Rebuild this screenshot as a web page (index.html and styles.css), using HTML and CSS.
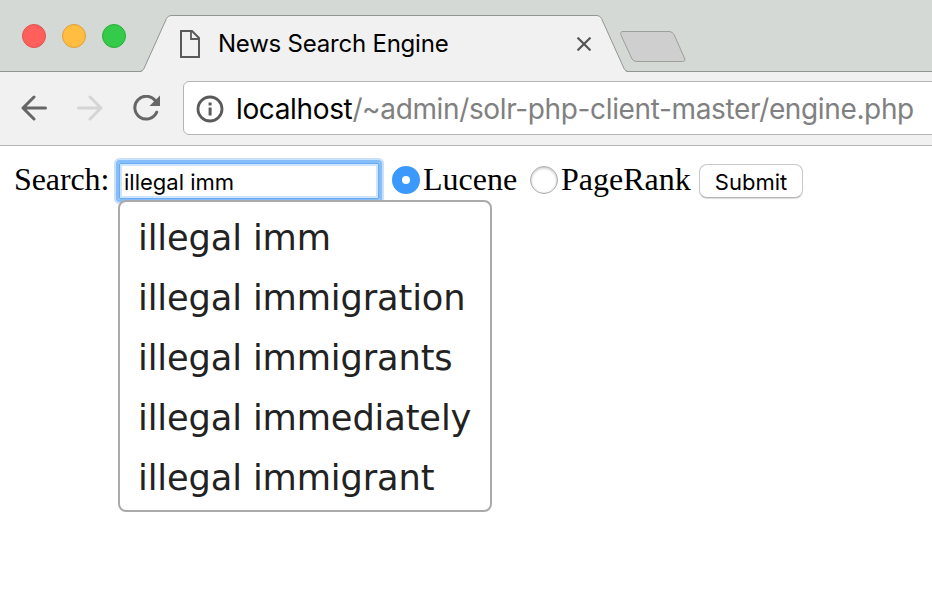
FILE: index.html
```
<!DOCTYPE html>
<html lang="en">
<head>
<meta charset="utf-8">
<title>News Search Engine</title>
<link rel="stylesheet" href="styles.css">
</head>
<body>
<header class="tabstrip">
  <div class="lights">
    <span class="light red"></span>
    <span class="light yellow"></span>
    <span class="light green"></span>
  </div>
  <div class="tab">
    <svg class="tab-shape" width="488" height="57" viewBox="0 0 488 57">
      <path d="M0 57 Q2.5 57 4 54 L26.500 3.500 Q28 .5 31 .5 H457 Q460 .5 461.500 3.500 L484 53.500 Q485.500 57 488 57Z" fill="#f1f1f1"/>
      <path d="M0 56.500 Q2.500 56.500 4 53.500 L26.500 3.500 Q28 .5 31 .5 H457 Q460 .5 461.500 3.500 L484 53.500 Q485.500 56.500 488 56.500" fill="none" stroke="#929692"/>
    </svg>
    <svg class="page-icon" width="20" height="28" viewBox="0 0 20 28" fill="none" stroke="#5a5a5a" stroke-width="2">
      <path d="M1 1H12L19 8V27H1Z"/><path d="M11 1V9H19" stroke-width="1.800"/>
    </svg>
    <span class="tab-title">News Search Engine</span>
    <svg class="close" width="14" height="14" viewBox="0 0 14 14" stroke="#555" stroke-width="2.200" stroke-linecap="round"><path d="M1.200 1.200 12.800 12.800M12.800 1.200 1.200 12.800"/></svg>
  </div>
  <svg class="new-tab" width="66" height="32" viewBox="0 0 66 32"><path d="M3 .5H49Q52.500 .5 54 3.500L64 26Q66.500 30.500 62.500 30.500H17Q13.500 30.500 12 28L1.200 4.500Q-.5 .5 3 .5Z" fill="#cfcfcf" stroke="#9b9e9b"/></svg>
</header>
<nav class="toolbar">
  <svg class="back" width="26" height="26" viewBox="0 0 26 26" fill="none" stroke="#666" stroke-width="3" stroke-linecap="round" stroke-linejoin="round"><path d="M24.500 13H2M13 2 2 13 13 24"/></svg>
  <svg class="forward" width="26" height="26" viewBox="0 0 26 26" fill="none" stroke="#d5d5d5" stroke-width="3" stroke-linecap="round" stroke-linejoin="round"><path d="M1.500 13H24M13 2 24 13 13 24"/></svg>
  <svg class="reload" width="28" height="27" viewBox="0 0 28 27"><path d="M22.500 6A11.400 11.400 0 1 0 23.700 17.200" fill="none" stroke="#666" stroke-width="3" stroke-linecap="round"/><path d="M27 .5V11H16.500Z" fill="#666"/></svg>
  <div class="address">
    <svg class="info" width="28" height="28" viewBox="0 0 28 28"><circle cx="14" cy="14" r="12" fill="none" stroke="#5a5a5a" stroke-width="2.800"/><path d="M12.600 7.500h3v3h-3zM12.600 12.500h3v8h-3z" fill="#5a5a5a"/></svg>
    <span class="url"><span class="host">localhost</span><span class="path">/~admin/solr-php-client-master/engine.php</span></span>
  </div>
</nav>
<main>
  <form class="search">
    <span class="label label-search">Search:</span>
    <div class="field">
      <div class="query">illegal imm</div>
      <ul class="suggestions">
        <li>illegal imm</li>
        <li>illegal immigration</li>
        <li>illegal immigrants</li>
        <li>illegal immediately</li>
        <li>illegal immigrant</li>
      </ul>
    </div>
    <span class="radio checked"></span>
    <span class="label label-lucene">Lucene</span>
    <span class="radio"></span>
    <span class="label label-rank">PageRank</span>
    <button type="button" class="submit"><span>Submit</span></button>
  </form>
</main>
</body>
</html>
```
FILE: styles.css
```
* { box-sizing: border-box; }
svg { flex: none; }
body {
  margin: 0;
  width: 932px;
  height: 598px;
  overflow: hidden;
  background: #fff;
  color: #000;
  font-family: Inter, sans-serif;
}
.tabstrip {
  display: flex;
  height: 72px;
  background: #d4d9d5;
  border-bottom: 1px solid #929692;
}
.lights { display: flex; gap: 16px; padding: 24px 0 0 22px; width: 142px; }
.light { width: 24px; height: 24px; border-radius: 50%; border: 1px solid; }
.red { background: #ff605c; border-color: #e2504d; }
.yellow { background: #ffbe41; border-color: #df9f36; }
.green { background: #34ca4a; border-color: #2bac3a; }
.tab {
  position: relative;
  display: flex;
  width: 478px;
  height: 57px;
  margin-top: 15px;
  padding-left: 38px;
}
.tab-shape { position: absolute; left: -2px; top: 0; }
.page-icon { position: relative; margin-top: 15px; }
.tab-title {
  position: relative;
  margin-left: 18px;
  width: 359px;
  font-size: 24px;
  line-height: 58px;
  letter-spacing: -0.22px;
  white-space: nowrap;
}
.close { position: relative; margin-top: 22px; }
.new-tab { position: relative; margin-top: 31px; }
.toolbar {
  display: flex;
  height: 74px;
  background: #f1f1f1;
  border-bottom: 1px solid #b5b5b5;
}
.back { margin: 23px 0 0 21px; }
.forward { margin: 23px 0 0 30px; }
.reload { margin: 23px 0 0 30px; }
.address {
  display: flex;
  flex: none;
  width: 770px;
  height: 54px;
  margin: 9px 0 0 22px;
  padding-left: 12px;
  background: #fff;
  border: 1px solid #b5b5b5;
  border-radius: 6px;
}
.info { margin-top: 13px; }
.url {
  margin-left: 12px;
  font-size: 28px;
  line-height: 54px;
  letter-spacing: -0.36px;
  white-space: nowrap;
}
.path { color: #808080; }
.search { display: flex; padding: 13px 0 0 14px; }
.label {
  font: 32px/41px "Liberation Serif", serif;
  white-space: nowrap;
}
.label-search { width: 104px; letter-spacing: -0.1px; }
.field { position: relative; width: 264px; }
.query {
  width: 262px;
  height: 38px;
  margin-top: 3px;
  padding-left: 5px;
  border: 1px solid #85bdfb;
  box-shadow: inset 0 0 0 1px #6aabf4, inset 0 0 0 3px #cfe5ff, 0 0 0 2px #85bdfb, 0 0 0 4px #c9e1fd;
  border-radius: 2px;
  font-size: 22px;
  line-height: 39px;
  white-space: nowrap;
}
.suggestions {
  position: absolute;
  left: 0;
  top: 41px;
  width: 374px;
  height: 312px;
  margin: 0;
  padding: 6px 0 0 18px;
  border: 2px solid #aaa;
  border-radius: 8px;
  background: #fff;
  list-style: none;
  color: #222;
  font: 35.2px/60px "DejaVu Sans", sans-serif;
  letter-spacing: -0.12px;
  white-space: nowrap;
}
.radio {
  width: 28px;
  height: 28px;
  margin: 7px 3px 0 10px;
  border: 1px solid #aaa;
  border-radius: 50%;
  background: #fff;
  box-shadow: inset 0 1px 3px #bbb;
}
.radio.checked {
  border: 10px solid #3b99fc;
  box-shadow: none;
}
.label-lucene { width: 97px; }
.label-rank { width: 138px; }
.submit {
  width: 104px;
  height: 34px;
  margin-top: 5px;
  padding: 0;
  border: 1px solid #c8c8c8;
  border-bottom-color: #b4b4b4;
  border-radius: 8px;
  background: #fff;
  box-shadow: 0 1px 1px #ddd;
  font: 22px/34px Inter, sans-serif;
  color: #000;
}
```
